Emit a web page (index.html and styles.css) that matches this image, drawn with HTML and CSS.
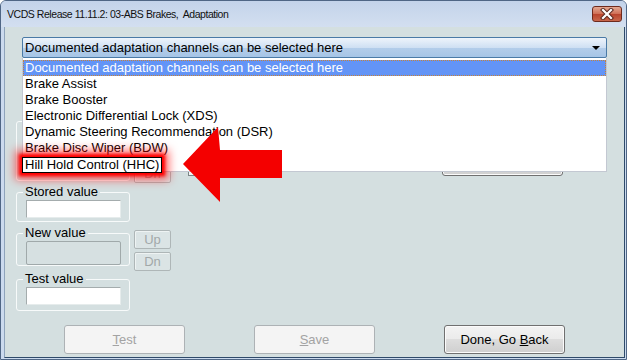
FILE: index.html
```html
<!DOCTYPE html>
<html lang="en">

<head>
    <meta charset="UTF-8">
    <meta name="viewport" content="width=device-width, initial-scale=1.0">
    <title>VCDS Adaptation</title>
    <link rel="stylesheet" href="styles.css">
</head>

<body>
    <div class="window">
        <div class="titlebar">
            <span class="title">VCDS Release 11.11.2: 03-ABS Brakes,&nbsp; Adaptation</span>
            <span class="close-btn">
                <svg width="16" height="12" viewBox="0 0 16 12">
                    <path d="M4 2 L12 10 M12 2 L4 10" stroke="#5a2a22" stroke-width="4.2" stroke-linecap="square" fill="none"/>
                    <path d="M4 2 L12 10 M12 2 L4 10" stroke="#fff" stroke-width="2.2" stroke-linecap="square" fill="none"/>
                </svg>
            </span>
        </div>

        <div class="client">
            <div class="combo">
                <span class="combo-text">Documented adaptation channels can be selected here</span>
                <span class="combo-arrow"></span>
            </div>

            <!-- controls hidden behind the open list -->
            <div class="upper">
                <div class="group ghost-group"></div>
                <div class="spin ghost-spin">
                    <div class="spin-btn"></div>
                    <div class="spin-btn">Dn</div>
                </div>
                <div class="check"></div>
                <div class="btn ghost-btn"></div>
            </div>

            <div class="row">
                <fieldset class="group">
                    <legend>Stored value</legend>
                    <div class="field"></div>
                </fieldset>
            </div>

            <div class="row row-new">
                <fieldset class="group group-new">
                    <legend>New value</legend>
                    <div class="field field-new"></div>
                </fieldset>
                <div class="spin">
                    <div class="spin-btn">Up</div>
                    <div class="spin-btn">Dn</div>
                </div>
            </div>

            <div class="row">
                <fieldset class="group group-test">
                    <legend>Test value</legend>
                    <div class="field"></div>
                </fieldset>
            </div>

            <div class="buttons">
                <div class="btn disabled"><span><u>T</u>est</span></div>
                <div class="btn disabled"><span><u>S</u>ave</span></div>
                <div class="btn"><span>Done, Go <u>B</u>ack</span></div>
            </div>

            <ul class="dropdown">
                <li class="selected">Documented adaptation channels can be selected here</li>
                <li>Brake Assist</li>
                <li>Brake Booster</li>
                <li>Electronic Differential Lock (XDS)</li>
                <li>Dynamic Steering Recommendation (DSR)</li>
                <li>Brake Disc Wiper (BDW)</li>
                <li><span class="mark">Hill Hold Control (HHC)</span></li>
            </ul>

            <svg class="arrow" width="112" height="86" viewBox="0 0 112 86">
                <polygon points="5,42 40,5 42,28 104,28 104,56 42,56 42,80" fill="#f40000"/>
            </svg>
        </div>
    </div>
</body>

</html>
```

FILE: styles.css
```css
* {
    box-sizing: border-box;
}

body {
    margin: 0;
    font-family: "Liberation Sans", Arial, sans-serif;
    font-size: 13px;
    color: #000;
}

.window {
    width: 627px;
    height: 360px;
    display: flex;
    flex-direction: column;
    background: #cbdaee;
    border: 1px solid #4f6685;
    border-radius: 6px 6px 0 0;
    overflow: hidden;
}

.titlebar {
    height: 26px;
    flex-shrink: 0;
    display: flex;
    align-items: center;
    padding-left: 6px;
    background: linear-gradient(#c3d3ea, #d3dff0);
}

.title {
    flex: 1;
    font-size: 10.5px;
    letter-spacing: -0.45px;
    color: #111;
}

.close-btn {
    width: 30px;
    height: 16px;
    margin-right: 4px;
    align-self: flex-start;
    margin-top: 5px;
    display: flex;
    align-items: center;
    justify-content: center;
    border: 1px solid #6e2a1d;
    border-radius: 3px;
    background: linear-gradient(#e3a892, #cf6e55 50%, #b9442d 51%, #c8674c);
}

.client {
    position: relative;
    flex: 1;
    margin: 0 1px 1px 3px;
    padding: 10px 0 0 11px;
    background: #d4dfe0;
    border-left: 1px solid #8ea3bb;
    border-right: 1px solid #2f4a6a;
    border-bottom: 1px solid #2f4a6a;
}

.combo {
    margin-left: 6px;
    width: 585px;
    height: 21px;
    display: flex;
    align-items: center;
    padding: 0 6px 0 2px;
    border: 1px solid #4a7aa6;
    border-radius: 2px;
    background: linear-gradient(#eef4fb, #cfe0f3 50%, #b3cdea 52%, #a6c5e6);
}

.combo-text {
    flex: 1;
}

.combo-arrow {
    width: 0;
    height: 0;
    border-left: 4px solid transparent;
    border-right: 4px solid transparent;
    border-top: 4px solid #000;
}

.upper {
    height: 127px;
    display: flex;
    align-items: flex-end;
}

.group {
    width: 114px;
    margin: 0;
    padding: 0 0 0 9px;
    min-width: 0;
    border: 1px solid #f7fafa;
    border-radius: 3px;
}

.group legend {
    padding: 0 2px;
    margin-left: -3px;
    line-height: 14px;
}

.ghost-group {
    height: 60px;
    margin-bottom: 4px;
}

.row {
    display: flex;
    align-items: flex-start;
    margin-bottom: 4px;
}

.row-new {
    margin-bottom: 1px;
}

.field {
    width: 95px;
    height: 18px;
    margin: 1px 0 3px;
    background: #fff;
    border: 1px solid;
    border-color: #a4acad #e6ecec #e6ecec #a4acad;
}

.field-new {
    height: 24px;
    margin-bottom: 0;
    background: #d6e0e1;
    border: 1px solid #a0a9aa;
    border-radius: 2px;
}

.group-test .field {
    margin-bottom: 5px;
}

.spin {
    margin-left: 4px;
    margin-top: 4px;
    display: flex;
    flex-direction: column;
    gap: 3px;
}

.ghost-spin {
    margin-bottom: 2px;
}

.spin-btn {
    width: 37px;
    height: 19px;
    display: flex;
    align-items: center;
    justify-content: center;
    color: #a2a8a9;
    background: #dbe4e5;
    border: 1px solid #aeb6b7;
    border-radius: 2px;
    box-shadow: inset 1px 1px 0 #eef3f3;
}

.check {
    width: 13px;
    height: 13px;
    margin: 0 0 9px 17px;
    background: #f2f4f4;
    border: 1px solid #7b8486;
}

.btn {
    width: 121px;
    height: 29px;
    display: flex;
    align-items: center;
    justify-content: center;
    border: 1px solid #707070;
    border-radius: 3px;
    background: linear-gradient(#f3f3f3, #ebebeb 48%, #dddddd 50%, #cfcfcf);
    box-shadow: inset 0 0 0 1px #fbfbfb;
}

.ghost-btn {
    height: 28px;
    margin: 0 0 9px 241px;
}

.buttons {
    display: flex;
    gap: 69px;
    margin: 14px 0 0 48px;
}

.btn.disabled {
    color: #a3a3a3;
    background: #f4f4f4;
    border-color: #adb2b5;
    box-shadow: none;
}

.dropdown {
    position: absolute;
    left: 17px;
    top: 31px;
    width: 585px;
    height: 114px;
    margin: 0;
    padding: 2px 0 0;
    list-style: none;
    background: #fff;
    border: 1px solid #c3c8d2;
    border-top: none;
}

.dropdown li {
    height: 16px;
    line-height: 16px;
    padding-left: 2px;
    white-space: nowrap;
}

.dropdown li.selected {
    color: #fff;
    background: #6394f6;
    line-height: 14px;
    border: 1px dotted #c98236;
    padding-left: 1px;
}

.mark {
    position: relative;
    display: block;
    width: fit-content;
    margin: 1px 0 0 -3px;
    padding: 0 2px;
    line-height: 14px;
    background: #fff;
    border: 1px solid #000;
    box-shadow: 0 0 3px 3px #ff0000, 0 0 10px 7px rgba(255, 0, 0, 0.55);
}

.arrow {
    position: absolute;
    left: 173px;
    top: 95px;
}
```
